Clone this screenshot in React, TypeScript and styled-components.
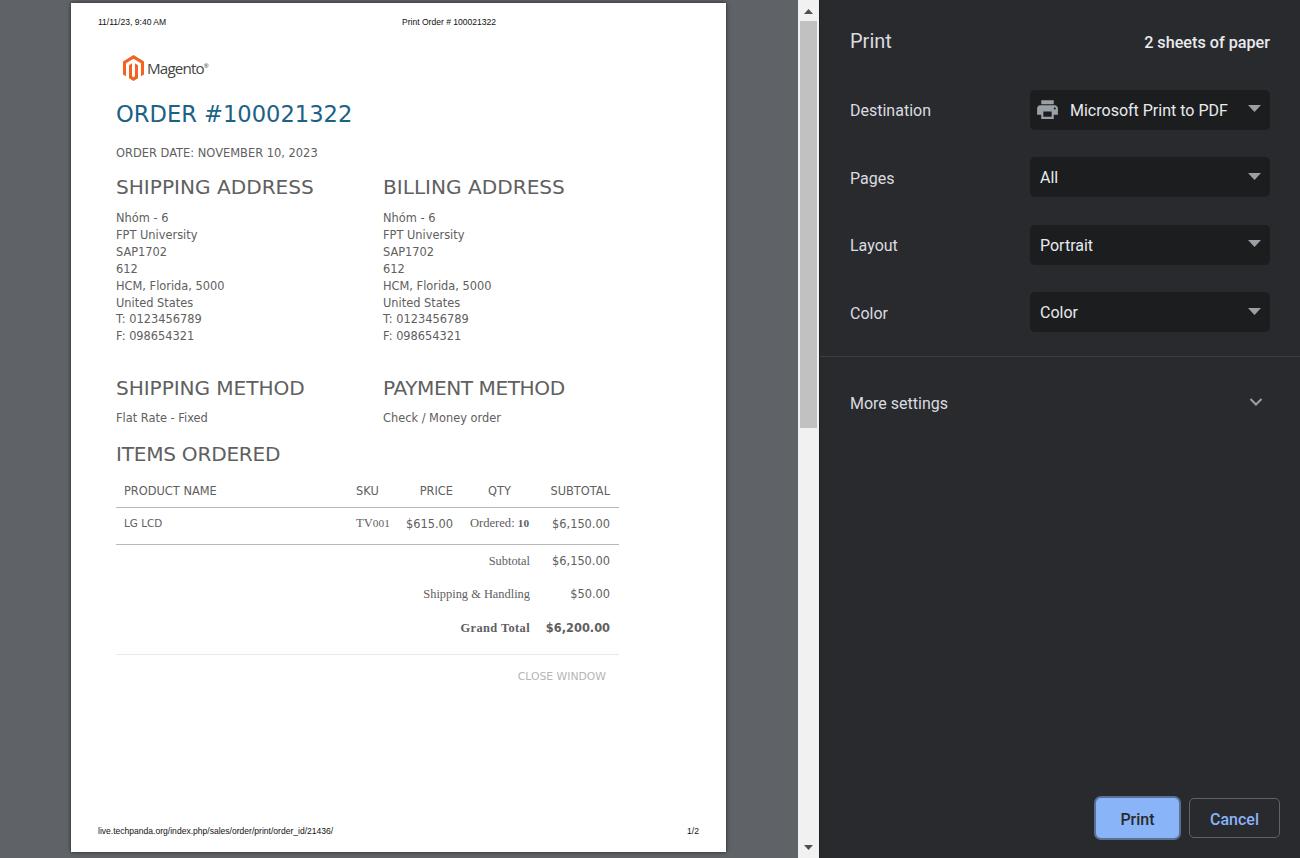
import React from "react";
import styled, { createGlobalStyle } from "styled-components";

const Global = createGlobalStyle`
  html, body { margin: 0; padding: 0; height: 100%; overflow: hidden; }
  #root { height: 100%; }
  * { box-sizing: border-box; }
`;

const Screen = styled.div`
  display: flex;
  width: 1300px;
  height: 858px;
  overflow: hidden;
`;

const Preview = styled.main`
  width: 798px;
  height: 858px;
  flex: none;
  background: #5f6368;
  padding: 3px 0 0 71px;
`;

const Paper = styled.div`
  width: 655px;
  height: 849px;
  background: #fff;
  box-shadow: 0 0 4px rgba(0, 0, 0, 0.65);
  display: flex;
  flex-direction: column;
  padding: 14px 27px 0;
  color: #606060;
  font-family: "DejaVu Sans", Verdana, sans-serif;
`;

const PrintLine = styled.div`
  display: grid;
  grid-template-columns: 304px auto;
  font-family: "Liberation Sans", Arial, sans-serif;
  font-size: 8.55px;
  line-height: 10px;
  color: #111;
`;

const PrintFooter = styled(PrintLine)`
  grid-template-columns: 1fr auto;
  margin-top: auto;
  margin-bottom: 16px;
`;

const Body = styled.div`
  width: 503px;
  margin-left: 18px;
`;

const LogoRow = styled.div`
  display: flex;
  align-items: center;
  height: 28px;
  margin: 27px 0 0 7px;
  gap: 3px;
`;

const LogoMark = styled.svg`
  width: 21px;
  height: 26px;
  flex: none;
`;

const LogoWord = styled.span`
  font-family: "Open Sans", sans-serif;
  font-size: 15.2px;
  letter-spacing: -0.85px;
  color: #444;
  line-height: 26px;
`;

const LogoReg = styled.sup`
  font-size: 6px;
  vertical-align: 6px;
  line-height: 0;
  letter-spacing: 0;
`;

const OrderTitle = styled.h1`
  margin: 16px 0 0;
  font-weight: 400;
  font-size: 22.6px;
  line-height: 32px;
  color: #1c6286;
`;

const OrderDate = styled.div`
  margin-top: 15px;
  font-size: 11.45px;
  line-height: 16px;
`;

const Columns = styled.div`
  display: grid;
  grid-template-columns: 267px 1fr;
`;

const Heading = styled.h2<{ $track?: number }>`
  margin: 0;
  font-weight: 400;
  font-size: 20.1px;
  line-height: 26px;
  color: #606060;
  letter-spacing: ${(p) => p.$track || 0}px;
`;

const AddressColumns = styled(Columns)`
  margin-top: 13px;
`;

const MethodColumns = styled(Columns)`
  margin-top: 30px;
`;

const Address = styled.div`
  margin-top: 10px;
  font-size: 11.4px;
  line-height: 16.9px;
`;

const MethodText = styled.div`
  margin-top: 9px;
  font-size: 11.4px;
  line-height: 16px;
`;

const ItemsHeading = styled(Heading)`
  margin-top: 15px;
`;

const Table = styled.table`
  margin-top: 8px;
  width: 503px;
  table-layout: fixed;
  border-collapse: collapse;
  font-size: 11.4px;
`;

const Th = styled.th<{ $align?: string }>`
  font-weight: 400;
  height: 32px;
  padding: 0 8px;
  text-align: ${(p) => p.$align || "left"};
  border-bottom: 1px solid #b8b8b8;
  white-space: nowrap;
  &:last-child { padding-right: 9px; }
`;

const Td = styled.td<{ $align?: string }>`
  height: 37px;
  padding: 0 8px 4px;
  text-align: ${(p) => p.$align || "left"};
  border-bottom: 1px solid #b8b8b8;
  white-space: nowrap;
  &:last-child { padding-right: 9px; }
`;

const ProductCell = styled(Td)`
  font-size: 10.4px;
  padding-bottom: 5px;
`;

const Serif = styled.span`
  font-family: "Liberation Serif", Georgia, serif;
  font-size: 12.6px;
`;

const OldDigits = styled.span`
  font-size: 0.9em;
`;

const TotalLabel = styled.td<{ $h: number; $strong?: boolean }>`
  height: ${(p) => p.$h}px;
  padding: 1px 8px 0;
  text-align: right;
  font-family: "Liberation Serif", Georgia, serif;
  font-size: 12.4px;
  font-weight: ${(p) => (p.$strong ? 700 : 400)};
  letter-spacing: ${(p) => (p.$strong ? "0.4px" : "0")};
  white-space: nowrap;
`;

const TotalValue = styled.td<{ $strong?: boolean }>`
  padding: 0 9px 0 0;
  text-align: right;
  font-weight: ${(p) => (p.$strong ? 700 : 400)};
  white-space: nowrap;
`;

const CloseRow = styled.div`
  margin-top: 9px;
  border-top: 1px solid #e9e9e9;
  padding: 14px 13px 0 0;
  text-align: right;
  font-size: 10.8px;
  line-height: 16px;
  color: #b5b5b5;
`;

const Scrollbar = styled.div`
  width: 21px;
  height: 858px;
  flex: none;
  background: #f1f1f1;
  display: flex;
  flex-direction: column;
  align-items: center;
`;

const ScrollArrow = styled.svg`
  width: 21px;
  height: 17px;
  flex: none;
  fill: #505050;
`;

const Thumb = styled.div`
  width: 17px;
  height: 407px;
  margin-top: 4px;
  background: #c1c1c1;
  flex: none;
`;

const ScrollSpacer = styled.div`
  flex: 1;
`;

const Sidebar = styled.aside`
  flex: 1;
  height: 858px;
  background: #292a2d;
  border-left: 1px solid #1f2022;
  display: flex;
  flex-direction: column;
  font-family: Roboto, sans-serif;
  color: #e8eaed;
`;

const SideHeader = styled.header`
  display: flex;
  justify-content: space-between;
  align-items: center;
  height: 82px;
  padding: 0 30px;
`;

const SideTitle = styled.h1`
  margin: 0;
  font-size: 20px;
  font-weight: 400;
  color: #dadce0;
`;

const SheetCount = styled.span`
  font-size: 16.2px;
  font-weight: 500;
  color: #e8eaed;
  position: relative;
  top: 1px;
`;

const Settings = styled.div`
  display: flex;
  flex-direction: column;
  padding: 7.8px 30px 24px;
  gap: 27.5px;
  border-bottom: 1px solid #3c3d40;
`;

const Row = styled.div`
  display: flex;
  align-items: center;
  justify-content: space-between;
  height: 40px;
`;

const RowLabel = styled.span`
  font-size: 16px;
  color: #dadce0;
  position: relative;
  top: 1px;
`;

const Select = styled.div`
  width: 240px;
  height: 40px;
  border-radius: 5px;
  background: #1c1d1f;
  display: flex;
  align-items: center;
  padding: 0 9px 0 10px;
  font-size: 16px;
  color: #e8eaed;
`;

const SelectText = styled.span`
  flex: 1;
  min-width: 0;
  padding-top: 0.5px;
`;

const PrinterIcon = styled.svg`
  width: 25px;
  height: 25px;
  fill: #9aa0a6;
  margin-left: -5px;
  margin-right: 10px;
  flex: none;
`;

const Caret = styled.svg`
  width: 13px;
  height: 7px;
  fill: #9aa0a6;
  flex: none;
  position: relative;
  top: -1px;
`;

const MoreRow = styled.div`
  display: flex;
  align-items: center;
  justify-content: space-between;
  height: 90px;
  padding: 0 30px;
`;

const Chevron = styled.svg`
  width: 24px;
  height: 24px;
  fill: none;
  stroke: #9aa0a6;
  stroke-width: 2;
  flex: none;
  position: relative;
  left: -2px;
`;

const Actions = styled.footer`
  margin-top: auto;
  display: flex;
  justify-content: flex-end;
  align-items: center;
  gap: 10px;
  padding: 0 20px 20px;
`;

const PrintButton = styled.button`
  width: 83px;
  height: 40px;
  padding: 3px 0 0;
  border: none;
  border-radius: 5px;
  background: #8ab4f8;
  color: #292a2d;
  font: 500 16px Roboto, sans-serif;
  box-shadow: 0 0 0 2px #5a7097;
`;

const CancelButton = styled.button`
  width: 91px;
  height: 40px;
  padding: 3px 0 0;
  border: 1px solid #5f6368;
  border-radius: 5px;
  background: transparent;
  color: #8ab4f8;
  font: 500 16px Roboto, sans-serif;
`;

const addr = ["Nhóm - 6", "FPT University", "SAP1702", "612", "HCM, Florida, 5000", "United States", "T: 0123456789", "F: 098654321"];

function AddressBlock() {
  return (
    <Address>
      {addr.map((l) => (
        <div key={l}>{l}</div>
      ))}
    </Address>
  );
}

function SelectCaret() {
  return (
    <Caret viewBox="0 0 13 7">
      <path d="M0 0h13L6.500 7z" />
    </Caret>
  );
}

export default function App() {
  return (
    <Screen>
      <Global />
      <Preview>
        <Paper>
          <PrintLine>
            <span>11/11/23, 9:40 AM</span>
            <span>Print Order # 100021322</span>
          </PrintLine>
          <Body>
            <LogoRow>
              <LogoMark viewBox="1.6 0 20.8 24" preserveAspectRatio="none">
                <path fill="#f26322" d="M12 24l-4.455-2.572v-12l2.970-1.715v12.001l1.485.902 1.485-.902V7.713l2.970 1.715v12L12 24zM22.391 6v12l-2.970 1.714V7.714L12 3.430 4.574 7.714v12L1.609 18V6L12 0l10.391 6z" />
              </LogoMark>
              <LogoWord>
                Magento<LogoReg>®</LogoReg>
              </LogoWord>
            </LogoRow>
            <OrderTitle>ORDER #100021322</OrderTitle>
            <OrderDate>ORDER DATE: NOVEMBER 10, 2023</OrderDate>
            <AddressColumns>
              <div>
                <Heading>SHIPPING ADDRESS</Heading>
                <AddressBlock />
              </div>
              <div>
                <Heading>BILLING ADDRESS</Heading>
                <AddressBlock />
              </div>
            </AddressColumns>
            <MethodColumns>
              <div>
                <Heading $track={-0.07}>SHIPPING METHOD</Heading>
                <MethodText>Flat Rate - Fixed</MethodText>
              </div>
              <div>
                <Heading $track={-0.43}>PAYMENT METHOD</Heading>
                <MethodText>Check / Money order</MethodText>
              </div>
            </MethodColumns>
            <ItemsHeading $track={-0.25}>ITEMS ORDERED</ItemsHeading>
            <Table>
              <colgroup>
                <col style={{ width: 232 }} />
                <col style={{ width: 50 }} />
                <col style={{ width: 63 }} />
                <col style={{ width: 77 }} />
                <col style={{ width: 81 }} />
              </colgroup>
              <thead>
                <tr>
                  <Th>PRODUCT NAME</Th>
                  <Th>SKU</Th>
                  <Th $align="right">PRICE</Th>
                  <Th $align="center">QTY</Th>
                  <Th $align="right">SUBTOTAL</Th>
                </tr>
              </thead>
              <tbody>
                <tr>
                  <ProductCell>LG LCD</ProductCell>
                  <Td>
                    <Serif>
                      TV<OldDigits>001</OldDigits>
                    </Serif>
                  </Td>
                  <Td $align="right">$615.00</Td>
                  <Td $align="center">
                    <Serif>
                      Ordered: <b><OldDigits>10</OldDigits></b>
                    </Serif>
                  </Td>
                  <Td $align="right">$6,150.00</Td>
                </tr>
                <tr>
                  <TotalLabel colSpan={4} $h={33}>Subtotal</TotalLabel>
                  <TotalValue>$6,150.00</TotalValue>
                </tr>
                <tr>
                  <TotalLabel colSpan={4} $h={34}>Shipping &amp; Handling</TotalLabel>
                  <TotalValue>$50.00</TotalValue>
                </tr>
                <tr>
                  <TotalLabel colSpan={4} $h={34} $strong>Grand Total</TotalLabel>
                  <TotalValue $strong>$6,200.00</TotalValue>
                </tr>
              </tbody>
            </Table>
            <CloseRow>CLOSE WINDOW</CloseRow>
          </Body>
          <PrintFooter>
            <span>live.techpanda.org/index.php/sales/order/print/order_id/21436/</span>
            <span>1/2</span>
          </PrintFooter>
        </Paper>
      </Preview>
      <Scrollbar>
        <ScrollArrow viewBox="0 0 21 17">
          <path d="M10.500 9l4.500 5H6z" />
        </ScrollArrow>
        <Thumb />
        <ScrollSpacer />
        <ScrollArrow viewBox="0 0 21 17">
          <path d="M6 4h9l-4.500 5z" />
        </ScrollArrow>
      </Scrollbar>
      <Sidebar>
        <SideHeader>
          <SideTitle>Print</SideTitle>
          <SheetCount>2 sheets of paper</SheetCount>
        </SideHeader>
        <Settings>
          <Row>
            <RowLabel>Destination</RowLabel>
            <Select>
              <PrinterIcon viewBox="0 0 24 24">
                <path d="M19 8H5c-1.660 0-3 1.340-3 3v6h4v4h12v-4h4v-6c0-1.660-1.340-3-3-3zm-3 11H8v-5h8v5zm3-7c-.550 0-1-.450-1-1s.450-1 1-1 1 .450 1 1-.450 1-1 1zm-1-9H6v4h12V3z" />
              </PrinterIcon>
              <SelectText>Microsoft Print to PDF</SelectText>
              <SelectCaret />
            </Select>
          </Row>
          <Row>
            <RowLabel>Pages</RowLabel>
            <Select>
              <SelectText>All</SelectText>
              <SelectCaret />
            </Select>
          </Row>
          <Row>
            <RowLabel>Layout</RowLabel>
            <Select>
              <SelectText>Portrait</SelectText>
              <SelectCaret />
            </Select>
          </Row>
          <Row>
            <RowLabel>Color</RowLabel>
            <Select>
              <SelectText>Color</SelectText>
              <SelectCaret />
            </Select>
          </Row>
        </Settings>
        <MoreRow>
          <RowLabel>More settings</RowLabel>
          <Chevron viewBox="0 0 24 24">
            <path d="M6.500 9l5.500 5.500L17.500 9" />
          </Chevron>
        </MoreRow>
        <Actions>
          <PrintButton>Print</PrintButton>
          <CancelButton>Cancel</CancelButton>
        </Actions>
      </Sidebar>
    </Screen>
  );
}
